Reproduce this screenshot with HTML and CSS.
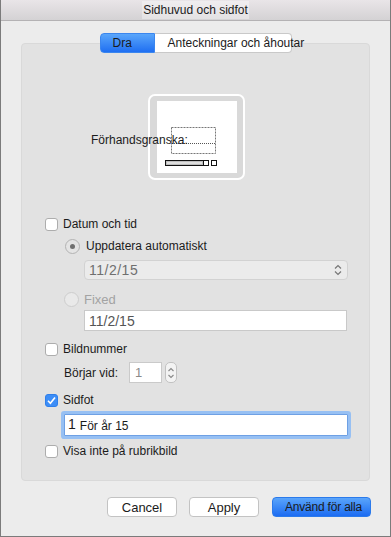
FILE: index.html
```html
<!DOCTYPE html>
<html lang="sv">

<head>
    <meta charset="UTF-8">
    <meta name="viewport" content="width=device-width, initial-scale=1.0">
    <title>Sidhuvud och sidfot</title>
    <link rel="stylesheet" href="styles.css">
</head>

<body>
    <div class="window">
        <div class="titlebar"><span class="title">Sidhuvud och sidfot</span></div>
        <div class="content">
            <div class="tabs">
                <span class="tab tab-active">Dra</span>
                <span class="tab tab-second">Anteckningar och åhoutar</span>
            </div>
            <div class="group">
                <!-- förhandsgranskning -->
                <div class="preview">
                    <span class="preview-label">Förhandsgranska:</span>
                    <svg class="thumb" width="97" height="86" viewBox="0 0 97 86">
                        <rect x="1" y="1" width="95" height="84" rx="6" fill="#d9d9d9" stroke="#fff" stroke-width="2" />
                        <rect x="9" y="7" width="80" height="72" fill="#fff" />
                        <rect x="23.5" y="33.5" width="44" height="26" fill="none" stroke="#777" stroke-dasharray="2 1" />
                        <line x1="24" y1="49.5" x2="67" y2="49.5" stroke="#555" stroke-dasharray="1 1" />
                        <rect x="17.5" y="66.5" width="38" height="5" fill="#bdbdbd" stroke="#111" />
                        <line x1="19" y1="69" x2="54" y2="69" stroke="#fff" />
                        <rect x="55.5" y="66.5" width="5" height="5" fill="#fff" stroke="#111" />
                        <rect x="63.5" y="66.5" width="5" height="5" fill="#fff" stroke="#111" />
                    </svg>
                </div>

                <div class="row row-datum"><span class="checkbox"></span>Datum och tid</div>
                <div class="row row-auto"><span class="radio radio-on"></span>Uppdatera automatiskt</div>
                <div class="select">
                    <span>11/2/15</span>
                    <svg width="8" height="12" viewBox="0 0 8 12">
                        <polyline points="1,4.5 4,1.5 7,4.5" fill="none" stroke="#777" stroke-width="1.2" />
                        <polyline points="1,7.5 4,10.5 7,7.5" fill="none" stroke="#777" stroke-width="1.2" />
                    </svg>
                </div>
                <div class="row row-fixed"><span class="radio radio-off"></span>Fixed</div>
                <div class="textbox textbox-date">11/2/15</div>

                <div class="row row-bild"><span class="checkbox"></span>Bildnummer</div>
                <div class="row row-start">
                    <span class="start-label">Börjar vid:</span>
                    <span class="number">1</span>
                    <span class="stepper">
                        <svg width="8" height="16" viewBox="0 0 8 16">
                            <polyline points="1.5,6 4,3.5 6.5,6" fill="none" stroke="#888" stroke-width="1.1" />
                            <polyline points="1.5,10 4,12.5 6.5,10" fill="none" stroke="#888" stroke-width="1.1" />
                        </svg>
                    </span>
                </div>

                <div class="row row-sidfot">
                    <span class="checkbox checkbox-on">
                        <svg width="11" height="11" viewBox="0 0 11 11">
                            <polyline points="2,5.8 4.4,8.3 9,2.5" fill="none" stroke="#fff" stroke-width="1.6" />
                        </svg>
                    </span>Sidfot
                </div>
                <div class="textbox textbox-footer"><span class="field-num">1</span>För år 15</div>

                <div class="row row-visa"><span class="checkbox"></span>Visa inte på rubrikbild</div>
            </div>

            <div class="buttons">
                <button class="btn">Cancel</button>
                <button class="btn">Apply</button>
                <button class="btn btn-primary">Använd för alla</button>
            </div>
        </div>
    </div>
</body>

</html>
```

FILE: styles.css
```css
* {
    margin: 0;
    padding: 0;
    box-sizing: border-box;
}

body {
    font-family: "Liberation Sans", Arial, sans-serif;
    font-size: 12px;
    color: #1b1b1b;
    background: #ececec;
}

.window {
    width: 391px;
    height: 537px;
    border: 1px solid #7b7b7b;
    border-top: 0;
    background: #ececec;
}

.titlebar {
    height: 21px;
    line-height: 20px;
    text-align: center;
    border-bottom: 1px solid #b4b2b4;
    background: linear-gradient(#e9e5e8, #d4d2d4);
}

.title {
    padding: 2px 1px;
    background: rgba(255, 255, 255, 0.35);
}

.content {
    padding: 12px 20px 0;
}

/* flikar */
.tabs {
    position: relative;
    z-index: 1;
    display: flex;
    width: 192px;
    height: 20px;
    margin: 0 auto -10px;
}

.tab {
    height: 20px;
    line-height: 18px;
    white-space: nowrap;
    border: 1px solid #c9c9c9;
    background: #fff;
}

.tab-active {
    width: 55px;
    padding-left: 12px;
    border-color: #3b86ee;
    border-radius: 4px 0 0 4px;
    background: linear-gradient(#5aa6fb, #1f6ff2);
}

.tab-second {
    width: 137px;
    padding-left: 13px;
    border-left: 0;
    border-radius: 0 4px 4px 0;
}

.group {
    height: 438px;
    padding-top: 50px;
    border: 1px solid #d9d9d9;
    border-radius: 4px;
    background: #e2e2e2;
}

/* förhandsgranskning */
.preview {
    position: relative;
    display: flex;
    height: 86px;
    padding-left: 126px;
}

.preview-label {
    position: absolute;
    left: 69px;
    top: 38px;
    z-index: 1;
    line-height: 16px;
}

.row {
    display: flex;
    align-items: center;
    height: 16px;
}

.checkbox {
    display: flex;
    align-items: center;
    justify-content: center;
    width: 13px;
    height: 13px;
    margin-right: 5px;
    border: 1px solid #adadad;
    border-radius: 3px;
    background: #fff;
}

.checkbox-on {
    border-color: #2f7fea;
    background: #3d8ef7;
}

.radio {
    display: flex;
    align-items: center;
    justify-content: center;
    width: 15px;
    height: 15px;
    border-radius: 50%;
}

.radio-on {
    margin-right: 6px;
    border: 1px solid #b3b3b3;
    background: #e4e4e4;
}

.radio-on::after {
    content: "";
    width: 5px;
    height: 5px;
    border-radius: 50%;
    background: #707070;
}

.radio-off {
    margin-right: 5px;
    border: 1px solid #cdcdcd;
    background: #e9e9e9;
}

.row-datum {
    margin-top: 36px;
    padding-left: 23px;
}

.row-auto {
    margin-top: 6px;
    padding-left: 43px;
}

.select {
    display: flex;
    align-items: center;
    justify-content: space-between;
    width: 264px;
    height: 20px;
    margin: 6px 0 0 62px;
    padding: 0 5px 0 4px;
    color: #6f6f6f;
    font-size: 14px;
    letter-spacing: 0.5px;
    border: 1px solid #d2d2d2;
    border-radius: 4px;
    background: #ebebeb;
}

.row-fixed {
    margin-top: 11px;
    padding-left: 42px;
    color: #a3a3a3;
    font-size: 13px;
}

.textbox {
    display: flex;
    align-items: center;
    background: #fff;
}

.textbox-date {
    width: 263px;
    height: 21px;
    margin: 3px 0 0 62px;
    padding-left: 4px;
    color: #555;
    font-size: 14px;
    border: 1px solid #c9c9c9;
}

.row-bild {
    margin-top: 10px;
    padding-left: 23px;
}

.row-start {
    height: 21px;
    margin-top: 5px;
    padding-left: 42px;
}

.start-label {
    width: 65px;
}

.number {
    width: 33px;
    height: 21px;
    padding: 2px 0 0 5px;
    color: #8a8a8a;
    font-size: 13px;
    border: 1px solid #cacaca;
    background: #fff;
}

.stepper {
    display: flex;
    align-items: center;
    justify-content: center;
    width: 12px;
    height: 21px;
    margin-left: 3px;
    border: 1px solid #c2c2c2;
    border-radius: 5px;
    background: #f3f3f3;
}

.row-sidfot {
    margin-top: 9px;
    padding-left: 23px;
}

.textbox-footer {
    width: 284px;
    height: 22px;
    margin: 6px 0 0 42px;
    padding: 1px 0 0 3px;
    border: 1px solid #6ea0e4;
    border-radius: 1px;
    box-shadow: 0 0 0 3px #97c0f3;
}

.field-num {
    margin-top: -3px;
    margin-right: 4px;
    font-size: 14px;
    line-height: 14px;
}

.row-visa {
    margin-top: 7px;
    padding-left: 23px;
}

/* knappar */
.buttons {
    display: flex;
    justify-content: flex-end;
    margin: 16px -1px 0 0;
}

.btn {
    width: 70px;
    height: 20px;
    margin-left: 12px;
    font-family: "Liberation Sans", Arial, sans-serif;
    font-size: 13px;
    color: #1b1b1b;
    border: 1px solid #c3c3c3;
    border-radius: 4px;
    background: #fff;
}

.btn-primary {
    width: 99px;
    margin-left: 13px;
    padding-left: 4px;
    font-size: 12px;
    letter-spacing: -0.2px;
    border-color: #2b7aeb;
    background: linear-gradient(#5aa5fb, #1c6cf2);
}
```
